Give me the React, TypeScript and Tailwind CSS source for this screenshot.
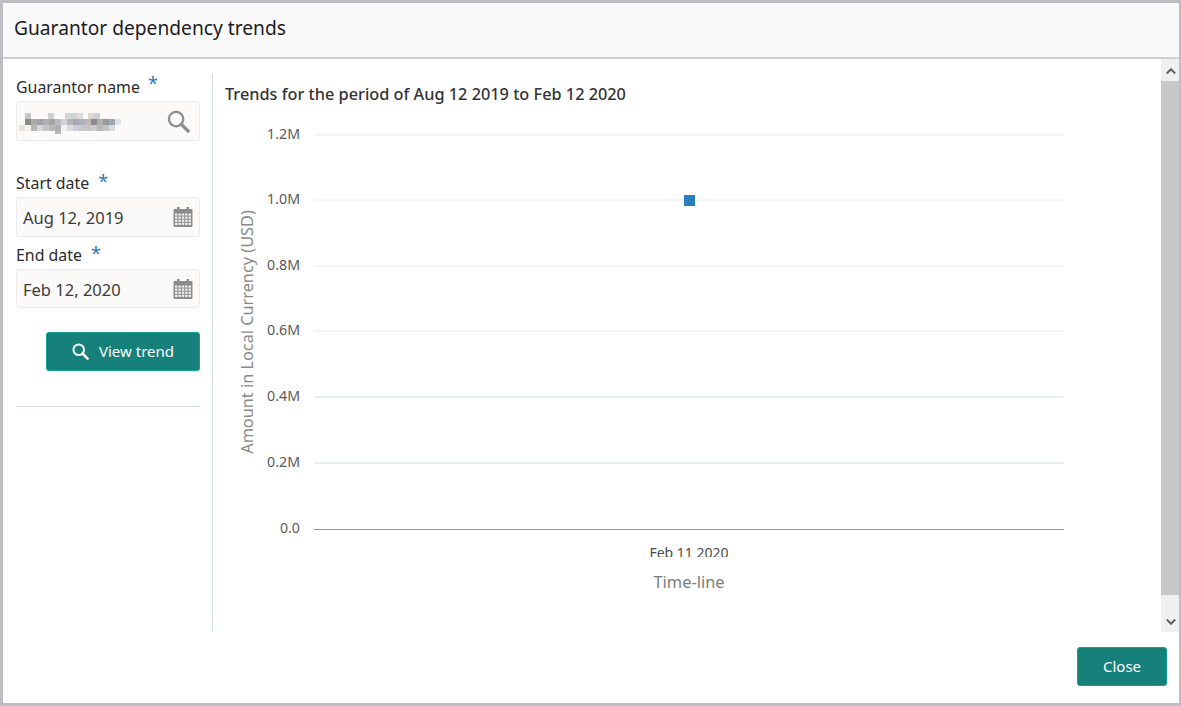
const uiFont = { fontFamily: '"Noto Sans", "Open Sans", sans-serif' }

const ticks = [
  { label: '1.2M', y: 20 },
  { label: '1.0M', y: 85 },
  { label: '0.8M', y: 151 },
  { label: '0.6M', y: 216 },
  { label: '0.4M', y: 282 },
  { label: '0.2M', y: 348 },
]

// pixelated (redacted) name, [x, row, colour]
const mosaic: [number, number, string][] = [
  [25, 0, '#c8c6c8'], [48, 0, '#d0d0d4'], [65, 0, '#d4d6da'], [71, 0, '#cfd2d6'], [77, 0, '#dcdcd8'], [88, 0, '#e0d8d0'], [94, 0, '#ccd0d8'],
  [25, 1, '#8e8a8a'], [31, 1, '#b0aaa6'], [37, 1, '#a0a4a8'], [43, 1, '#aeb0b4'], [49, 1, '#a4a4a6'], [55, 1, '#b8bcc0'], [61, 1, '#d0d4d8'], [67, 1, '#b8b4b4'],
  [73, 1, '#a8a8b4'], [79, 1, '#b0b0bc'], [85, 1, '#c0b8b4'], [91, 1, '#8c8c8c'], [97, 1, '#b0b0b0'], [103, 1, '#98989a'], [109, 1, '#a0a4b0'], [115, 1, '#dfe4ea'],
  [19, 2, '#e8e4dc'], [25, 2, '#f4f2ee'], [31, 2, '#b8b6b2'], [37, 2, '#d4d8d8'], [43, 2, '#c4c8c8'], [49, 2, '#b8b8bc'], [55, 2, '#b0b0b2'], [61, 2, '#f0f2f2'],
  [67, 2, '#d8dce0'], [73, 2, '#c8cedc'], [79, 2, '#c8c8cc'], [85, 2, '#c8c4c4'], [91, 2, '#c8ccd0'], [97, 2, '#b8b8ba'], [103, 2, '#c0c4c8'], [109, 2, '#d4dce0'],
  [55, 3, '#b8b8b8'],
]

function SearchIcon({ className, stroke }: { className: string; stroke: number }) {
  return (
    <svg viewBox="0 0 24 24" className={className} fill="none" stroke="currentColor">
      <circle cx="9.5" cy="9.5" r="7.5" strokeWidth={stroke} />
      <path d="M15 15l7 7" strokeWidth="3.6" strokeLinecap="round" />
    </svg>
  )
}

function CalendarIcon() {
  const cells = [0, 1, 2, 3, 4]
  return (
    <svg viewBox="0 0 20 20" className="w-5 h-5 text-[#8c8c8c]" fill="currentColor">
      <rect x="4" y="0" width="2.5" height="4" />
      <rect x="13.5" y="0" width="2.5" height="4" />
      <rect x="0.5" y="2" width="19" height="18" rx="1" />
      {cells.map((c) =>
        [0, 1, 2, 3].map((r) => (
          <rect key={`${c}-${r}`} x={2 + c * 3.4} y={6.5 + r * 3.1} width="2.4" height="2.1" fill="#f4f2f0" />
        )),
      )}
    </svg>
  )
}

function Field({ label, value, box }: { label: string; value: string; box: string }) {
  return (
    <div>
      <div className="flex items-start h-[26px] text-[15.9px] leading-[25px] text-[#2b2b2b]">
        {label}
        <span className="ml-[9px] text-[18px] leading-[20px] text-[#2f78b5]">*</span>
      </div>
      <div className={`flex items-center justify-between ${box} pl-[6px] pr-[6px] bg-[#fcfaf8] border border-[#ebebeb] rounded-[3px] text-[16.5px] text-[#3a3a3a]`}>
        <span className="pt-[3px]">{value}</span>
        <CalendarIcon />
      </div>
    </div>
  )
}

function Sidebar() {
  return (
    <aside className="w-[210px] h-[558px] mt-[15px] shrink-0 pl-[13px] pr-3 border-r border-[#d3e0e6]">
      <div className="mb-[30px]">
        <div className="flex items-start h-[27px] pt-[1px] text-[15.9px] leading-[25px] text-[#2b2b2b]">
          Guarantor name
          <span className="ml-2 text-[18px] leading-[16px] text-[#2f78b5]">*</span>
        </div>
        <div className="flex items-center justify-between h-10 pr-[9px] bg-[#fcfaf8] border border-[#ebebeb] rounded-[3px]">
          <svg width="120" height="38">
            {mosaic.map(([x, row, fill]) => (
              <rect key={`${x}-${row}`} x={x - 17} y={11 + row * 6} width="6" height={row === 3 ? 3 : 6} fill={fill} />
            ))}
          </svg>
          <SearchIcon className="w-[23px] h-[23px] text-[#8f8f8f]" stroke={2.4} />
        </div>
      </div>
      <Field label="Start date" value="Aug 12, 2019" box="h-10" />
      <div className="mt-[6px]">
        <Field label="End date" value="Feb 12, 2020" box="h-[39px]" />
      </div>
      <div className="flex justify-end mt-6">
        <button className="flex items-center justify-center gap-[10px] w-[154px] h-[39px] bg-[#16807a] border border-[#13a096] rounded-[3px] text-[15px] text-white">
          <SearchIcon className="w-[17px] h-[17px] text-white" stroke={2.8} />
          View trend
        </button>
      </div>
      <div className="mt-[35px] border-t border-[#d3e0e6]" />
    </aside>
  )
}

function TrendChart() {
  return (
    <svg width="936" height="510" className="block mt-[9px]" style={uiFont}>
      <defs>
        <clipPath id="date-clip">
          <rect x="300" y="425" width="400" height="17" />
        </clipPath>
      </defs>
      {ticks.map((t) => (
        <g key={t.label}>
          <line x1="89" x2="839" y1={t.y} y2={t.y} stroke="#e8edf1" strokeWidth={t.y > 270 ? 2 : 1} />
          <text x="75" y={t.y + 4} textAnchor="end" fontSize="14.2" fill="#5a5a5a">
            {t.label}
          </text>
        </g>
      ))}
      <line x1="89" x2="839" y1="414.5" y2="414.5" stroke="#999999" />
      <text x="75" y="418" textAnchor="end" fontSize="14.2" fill="#5a5a5a">
        0.0
      </text>
      <rect x="459" y="80" width="11" height="11" fill="#2a7fbf" />
      <text x="464" y="443" textAnchor="middle" fontSize="14" fill="#4a4a4a" clipPath="url(#date-clip)">
        Feb 11 2020
      </text>
      <text x="464" y="473" textAnchor="middle" fontSize="16.4" fill="#7c7c7c">
        Time-line
      </text>
      <text transform="translate(28 217) rotate(-90)" textAnchor="middle" fontSize="16.3" fill="#8a8a8a">
        Amount in Local Currency (USD)
      </text>
    </svg>
  )
}

function Scrollbar() {
  return (
    <div className="flex flex-col w-[18px] h-[573px] shrink-0 bg-[#f0f0f0] text-[#606060]">
      <div className="flex justify-center h-[22px] pl-[2px] pt-[9px]">
        <svg viewBox="0 0 10 6" className="w-[10px] h-[6px]" fill="none" stroke="currentColor" strokeWidth="2">
          <path d="M0.8 5.5L5 1.2L9.2 5.5" />
        </svg>
      </div>
      <div className="flex-1 bg-[#c8c8c8]" />
      <div className="flex justify-center h-[37px] pl-[2px] pt-[24px]">
        <svg viewBox="0 0 10 6" className="w-[10px] h-[6px]" fill="none" stroke="currentColor" strokeWidth="2">
          <path d="M0.8 0.5L5 4.8L9.2 0.5" />
        </svg>
      </div>
    </div>
  )
}

export default function App() {
  return (
    <div className="flex flex-col w-[1181px] h-[706px] bg-white border-[3px] border-r-2 border-[#bdbdc2] overflow-hidden" style={uiFont}>
      <div className="flex items-center h-[56px] shrink-0 pl-[11px] pb-[4px] bg-[#f9f9f9] border-b-2 border-[#cfcfcf] text-[19.2px] text-[#1c1c1c]">
        Guarantor dependency trends
      </div>
      <div className="flex flex-1 min-h-0">
        <Sidebar />
        <main className="flex-1 pl-3 pt-[23px]">
          <h2 className="h-[24px] text-[16.3px] leading-[24px] font-medium text-[#333333]">
            Trends for the period of Aug 12 2019 to Feb 12 2020
          </h2>
          <TrendChart />
        </main>
        <Scrollbar />
      </div>
      <div className="flex justify-end h-[71px] shrink-0 pt-[15px] pr-3">
        <button className="w-[90px] h-[39px] bg-[#16807a] border border-[#13a096] rounded-[3px] text-[15px] text-white">
          Close
        </button>
      </div>
    </div>
  )
}
